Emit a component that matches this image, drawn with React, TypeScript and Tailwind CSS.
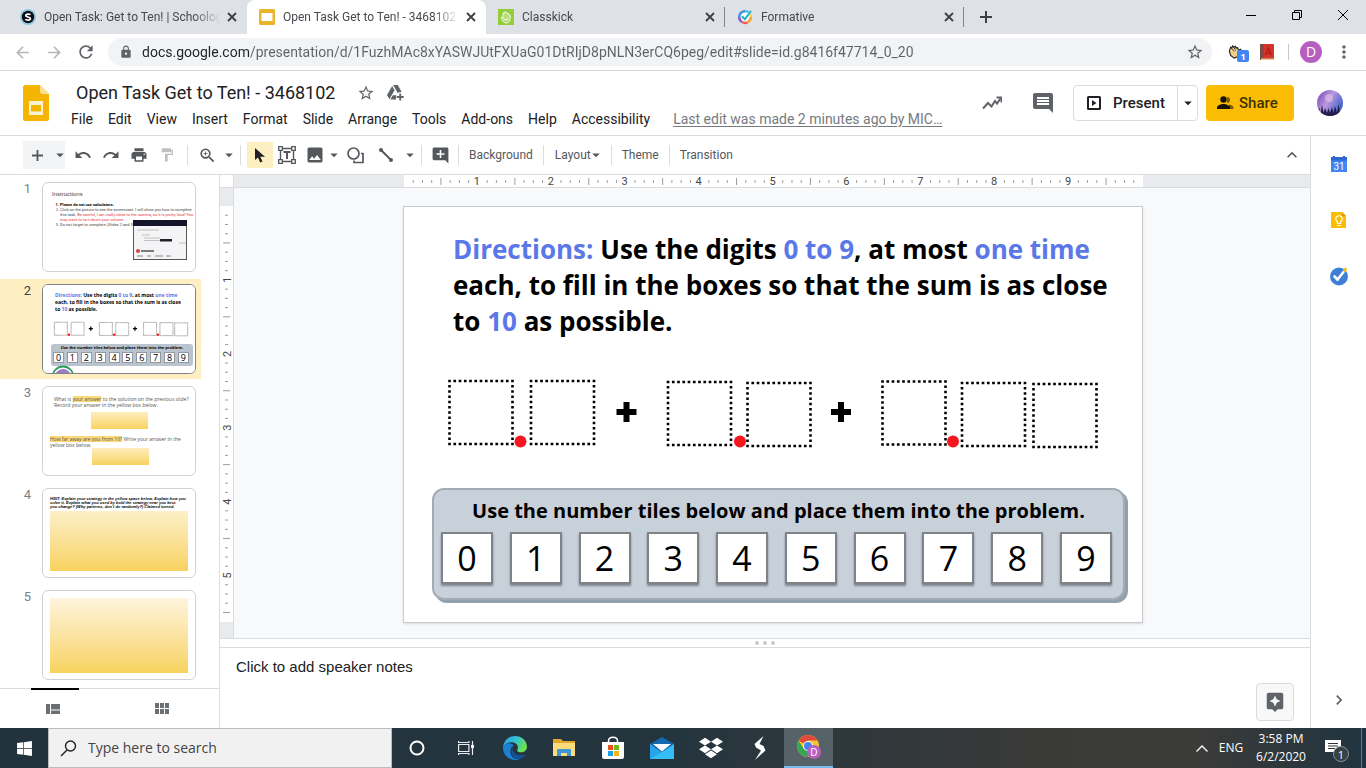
import type { ReactNode } from "react";
import {
  MdAddComment,
  MdArrowBack,
  MdArrowDropDown,
  MdArrowForward,
  MdAssistant,
  MdFormatPaint,
  MdImage,
  MdInsertComment,
  MdKeyboardArrowRight,
  MdKeyboardArrowUp,
  MdLock,
  MdMoreVert,
  MdPrint,
  MdRedo,
  MdRefresh,
  MdStarBorder,
  MdUndo,
  MdZoomIn,
} from "react-icons/md";
import { FaDropbox, FaWindows } from "react-icons/fa";

/* ---------- Browser chrome ---------- */

function SchoologyIcon() {
  return (
    <svg viewBox="0 0 16 16" className="size-4 shrink-0">
      <circle cx="8" cy="8" r="8" fill="#8fc8e2" />
      <circle cx="8" cy="8" r="6.2" fill="#0b0f12" />
      <path d="M10.4 5.900C9.800 4.800 5.800 4.500 5.800 6.500s4.600 1 4.600 3.100S6 11.500 5.500 10" fill="none" stroke="#fff" strokeWidth="1.7" />
    </svg>
  );
}

function SlidesTabIcon() {
  return (
    <svg viewBox="0 0 16 16" className="size-4 shrink-0">
      <rect width="16" height="16" rx="1.5" fill="#e9b52c" />
      <rect x="2.5" y="4" width="11" height="8" fill="#fff" />
    </svg>
  );
}

function ClasskickIcon() {
  return (
    <svg viewBox="0 0 16 16" className="size-4 shrink-0">
      <rect width="16" height="16" fill="#93ce3a" />
      <path
        d="M3 8.500c.5-.8 1.600-.4 2 .4V4.500c0-.9 1.200-.9 1.300 0V3.400c.1-.9 1.400-.9 1.500 0v.4c.2-.8 1.400-.7 1.500.2v.8c.3-.7 1.500-.5 1.500.4V6c.4-.6 1.500-.4 1.500.5C12.500 11 11.500 14 8.300 14 5.500 14 4.500 12 3 8.500Z"
        fill="#b5de78"
        stroke="#fff"
        strokeWidth=".8"
      />
      <path d="M5.500 9.500c1.500 1.800 3.500 1.800 5 -.3" fill="none" stroke="#fff" />
    </svg>
  );
}

function FormativeIcon() {
  return (
    <svg viewBox="0 0 16 16" className="size-4 shrink-0" fill="none" strokeWidth="2.5">
      <circle cx="8" cy="8" r="6" fill="#fff" />
      <path d="M8 2.200A5.800 5.800 0 0 0 2.200 8" stroke="#3f8fe0" />
      <path d="M2.200 8A5.800 5.800 0 0 0 5 13" stroke="#8a5fc4" />
      <path d="M5 13a5.800 5.800 0 0 0 5.500.3" stroke="#ee5f5b" />
      <path d="M10.500 13.300A5.800 5.800 0 0 0 13.800 8" stroke="#f6a63a" />
      <path d="M13.800 8a5.800 5.800 0 0 0-.6-2.600" stroke="#f7d23e" />
      <path d="M8 2.200c1.500 0 2.600.4 3.500 1.100" stroke="#52c4e8" />
      <path d="m4.800 7.300 3 3L14 2" stroke="#18b3c7" strokeWidth="2" />
    </svg>
  );
}

const tabs: { title: string; icon: ReactNode; active?: boolean; line?: boolean }[] = [
  { title: "Open Task: Get to Ten! | Schoology", icon: <SchoologyIcon /> },
  { title: "Open Task Get to Ten! - 3468102", icon: <SlidesTabIcon />, active: true },
  { title: "Classkick", icon: <ClasskickIcon />, line: true },
  { title: "Formative", icon: <FormativeIcon />, line: true },
];

function TabStrip() {
  return (
    <div className="flex h-[34px] items-stretch bg-[#dee1e6] pl-2">
      {tabs.map((tab) => (
        <div
          key={tab.title}
          className={
            tab.active
              ? "flex w-[239px] items-center rounded-t-lg bg-white pl-3"
              : "flex w-[239px] items-center pl-3"
          }
        >
          {tab.icon}
          <a
            href="#tab"
            className="ml-2 w-[176px] overflow-hidden mask-[linear-gradient(90deg,#000_150px,transparent_176px)] font-[Roboto,sans-serif] text-xs whitespace-nowrap text-[#45494d]"
          >
            {tab.title}
          </a>
          <button aria-label="Close tab" className="ml-1 grid size-4 shrink-0 place-items-center text-[#3c4043]">
            <svg viewBox="0 0 10 10" className="size-[10px]" stroke="currentColor" strokeWidth="1.8"><path d="m1 1 8 8M9 1 1 9" /></svg>
          </button>
          {tab.line && <span className="ml-[6px] h-5 w-px shrink-0 bg-[#80868b]" />}
        </div>
      ))}
      <button aria-label="New tab" className="grid w-11 place-items-center text-[#3c4043]">
        <svg viewBox="0 0 12 12" className="size-3" stroke="currentColor" strokeWidth="2"><path d="M6 0v12M0 6h12" /></svg>
      </button>
      <div className="ml-auto flex h-[29px] text-black">
        <button aria-label="Minimize" className="grid w-[46px] place-items-center">
          <svg viewBox="0 0 10 10" className="size-[10px]"><path d="M0 5.500h10" stroke="currentColor" /></svg>
        </button>
        <button aria-label="Restore" className="grid w-[46px] place-items-center">
          <svg viewBox="0 0 10 10" className="size-[10px]" fill="none" stroke="currentColor">
            <path d="M.5 2.500h7v7h-7zM2.500 2.500v-2h7v7h-2" />
          </svg>
        </button>
        <button aria-label="Close window" className="grid w-[46px] place-items-center">
          <svg viewBox="0 0 10 10" className="size-[10px]" stroke="currentColor"><path d="m0 0 10 10M10 0 0 10" /></svg>
        </button>
      </div>
    </div>
  );
}

function AddressBar() {
  return (
    <div className="flex h-[37px] items-center border-b border-[#d5d7da] pr-3 pl-[6px] text-[#5f6368]">
      <button aria-label="Back" className="grid w-8 place-items-center text-[#b4b6b9]"><MdArrowBack className="size-[19px]" /></button>
      <button aria-label="Forward" className="grid w-8 place-items-center text-[#b4b6b9]"><MdArrowForward className="size-[19px]" /></button>
      <button aria-label="Reload" className="grid w-8 place-items-center"><MdRefresh className="size-5" /></button>
      <div className="ml-[6px] flex h-7 flex-1 items-center rounded-full bg-[#f1f3f4] pr-2 pl-[11px]">
        <MdLock className="size-[14px]" />
        <input
          aria-label="Address"
          defaultValue="docs.google.com/presentation/d/1FuzhMAc8xYASWJUtFXUaG01DtRIjD8pNLN3erCQ6peg/edit#slide=id.g8416f47714_0_20"
          className="ml-[9px] min-w-0 flex-1 bg-[linear-gradient(90deg,#202124_107px,#5f6368_107px)] bg-clip-text font-[Roboto,sans-serif] text-sm text-transparent outline-none"
        />
        <button aria-label="Bookmark this page"><MdStarBorder className="size-[18px]" /></button>
      </div>
      <button aria-label="Hand raise extension" className="relative ml-4 size-5">
        <svg viewBox="0 0 16 16" className="size-[14px]">
          <path d="M1.500 7 3 2.500l1 1L5.500 1l1.200 1.500L8.500 1.500l.8 2L11 3l1 3 2.500-1 .5 2-3 6-5 2-4-3Z" fill="#efcf8d" stroke="#222" strokeWidth="1.3" />
          <path d="m4 3.500 3 4M6.700 2.500l2 4" stroke="#222" strokeWidth=".8" />
        </svg>
        <span className="absolute top-2 left-[9px] grid h-3 w-3 place-items-center rounded-xs bg-[#4285f4] font-['Open_Sans',sans-serif] text-[9px] font-bold text-white">1</span>
      </button>
      <button aria-label="Dictionary extension" className="ml-3 grid place-items-center">
        <svg viewBox="0 0 14 16" className="h-4 w-[14px]">
          <rect width="14" height="16" rx="1" fill="#d5342b" />
          <rect width="3.5" height="16" fill="#7d4a45" />
          <path d="M1 14.500h13V16H1z" fill="#e7c9a4" />
          <path d="m5.500 11 3-7 3 7M6.500 9h4" stroke="#b01f1b" fill="none" strokeWidth="1.3" />
        </svg>
      </button>
      <span className="mr-[11px] ml-[14px] h-4 w-px bg-[#c6c8ca]" />
      <button aria-label="Profile" className="grid size-[22px] place-items-center rounded-full bg-[#b75fc0] font-['Open_Sans',sans-serif] text-sm text-white">D</button>
      <button aria-label="Browser menu" className="ml-3 grid place-items-center"><MdMoreVert className="size-5" /></button>
    </div>
  );
}

/* ---------- Slides header ---------- */

const menus = ["File", "Edit", "View", "Insert", "Format", "Slide", "Arrange", "Tools", "Add-ons", "Help", "Accessibility"];

function Avatar() {
  return (
    <svg viewBox="0 0 26 26" className="size-[26px]">
      <defs>
        <linearGradient id="sky" x1="0" y1="0" x2="1" y2=".6">
          <stop offset="0" stopColor="#7440b0" />
          <stop offset=".5" stopColor="#bb98e0" />
          <stop offset="1" stopColor="#3a62c9" />
        </linearGradient>
        <clipPath id="round"><circle cx="13" cy="13" r="13" /></clipPath>
      </defs>
      <g clipPath="url(#round)">
        <rect width="26" height="26" fill="url(#sky)" />
        <circle cx="12" cy="8" r="4" fill="#f0cbe6" opacity=".5" />
        <path d="M0 24 2 17l1.500 6L5 15l1.500 8L8 18l2 5 1.500-5 1.500 5 2-6 1.500 6L18 16l2 7 1.500-9 1.500 9 3-5v10H0Z" fill="#221c4a" />
      </g>
    </svg>
  );
}

function DriveIcon() {
  return (
    <svg viewBox="0 0 17 16" className="h-4 w-[17px]" fill="currentColor">
      <path d="M5.200 1 0 10l2.400 4.200L7.600 5.200Z" />
      <path d="M6.200 0h4.600l4 7.200a5 5 0 0 0-4 1Z" />
      <path d="M3.400 14.500 5.800 10.300H9.400a5 5 0 0 0-.2 4.200Z" />
      <path d="M12.300 8.500h1.800v2.600h2.600v1.800h-2.600v2.600h-1.800v-2.600H9.700v-1.800h2.600Z" />
    </svg>
  );
}

function DocHeader() {
  return (
    <header className="flex h-[65px] items-center border-b border-[#dadce0] pr-[23px] pl-[23px]">
      <svg viewBox="0 0 26 36" className="h-9 w-[26px] shrink-0">
        <path d="M2.500 0H17l9 9v24.500a2.500 2.500 0 0 1-2.500 2.500h-21A2.500 2.500 0 0 1 0 33.500v-31A2.500 2.500 0 0 1 2.500 0Z" fill="#f4b400" />
        <path d="M17 0v6.500A2.500 2.500 0 0 0 19.500 9H26Z" fill="#fbdf93" />
        <path fillRule="evenodd" d="M6 16h14v14H6Zm2 4v6.500h10V20Z" fill="#fdf3d3" />
      </svg>
      <div className="ml-[22px] flex min-w-0 flex-1 flex-col pt-[3px]">
        <div className="flex h-7 items-center pl-[5px] text-[#5f6368]">
          <input
            aria-label="Document title"
            defaultValue="Open Task Get to Ten! - 3468102"
            className="field-sizing-content font-[Roboto,sans-serif] text-lg text-[#202124] outline-none"
          />
          <button aria-label="Star" className="ml-[22px]"><MdStarBorder className="size-[18px]" /></button>
          <button aria-label="Move to Drive" className="ml-3"><DriveIcon /></button>
        </div>
        <nav className="flex h-6 items-center gap-[15px] font-[Roboto,sans-serif] text-sm whitespace-nowrap text-[#202124]">
          {menus.map((m) => <button key={m}>{m}</button>)}
          <a href="#history" className="ml-2 text-[#777b80] underline underline-offset-2">
            Last edit was made 2 minutes ago by MIC…
          </a>
        </nav>
      </div>
      <button aria-label="Activity" className="grid size-6 place-items-center text-[#5f6368]">
        <svg viewBox="0 0 20 14" className="h-[14px] w-5" fill="none" stroke="currentColor" strokeWidth="2">
          <path d="m1 12.500 5-5.500 3.500 3.500L13 5l2 2.500L18.500 2.500" />
          <path d="M14.500 1.500h5v5" />
        </svg>
      </button>
      <button aria-label="Comments" className="ml-[27px] text-[#5f6368]"><MdInsertComment className="size-6" /></button>
      <div className="ml-[18px] flex h-9 rounded border border-[#dadce0] text-[#202124]">
        <button className="flex w-[103px] items-center gap-3 pl-[13px] font-[Roboto,sans-serif] text-[15px] font-medium">
          <svg viewBox="0 0 14 14" className="size-[14px] shrink-0">
            <rect x="1" y="1" width="12" height="12" rx=".5" fill="none" stroke="currentColor" strokeWidth="2" />
            <path d="M5 4v6l4.500-3Z" fill="currentColor" />
          </svg>
          Present
        </button>
        <button aria-label="Present options" className="grid w-5 place-items-center border-l border-[#dadce0]">
          <MdArrowDropDown className="size-[18px]" />
        </button>
      </div>
      <button className="ml-2 flex h-9 w-[88px] items-center gap-[5px] rounded bg-[#fbbc04] pl-[11px] font-[Roboto,sans-serif] text-[15px] font-medium text-[#3f3206]">
        <svg viewBox="0 0 17 14" className="h-[14px] w-[17px]">
          <path d="M10 1a3 3 0 1 1 0 6V1Zm2 7.500c2.500.4 4.500 1.500 4.500 3V13H12Z" fill="#7a5c0c" />
          <circle cx="6.5" cy="3.5" r="3.2" fill="#151208" />
          <path d="M0 13v-1.500c0-2.200 4-3.500 6.500-3.500s6.500 1.300 6.500 3.500V13Z" fill="#151208" />
        </svg>
        Share
      </button>
      <button aria-label="Google account" className="ml-[23px]"><Avatar /></button>
    </header>
  );
}

/* ---------- Slides toolbar ---------- */

function Tool({ label, children }: { label: string; children: ReactNode }) {
  return <button aria-label={label} className="grid h-7 w-7 place-items-center">{children}</button>;
}

function Drop({ label }: { label: string }) {
  return (
    <button aria-label={label} className="grid h-7 w-[14px] place-items-center">
      <MdArrowDropDown className="size-[18px]" />
    </button>
  );
}

function Divider() {
  return <span className="mx-[6px] h-5 w-px bg-[#dadce0]" />;
}

function Toolbar() {
  return (
    <div className="flex h-[39px] items-center border-b border-[#dadce0] pr-1 pl-[23px] font-[Roboto,sans-serif] text-xs text-[#54585d]">
      <div className="mr-1 flex bg-[#f1f3f4]">
        <Tool label="New slide">
          <svg viewBox="0 0 12 12" className="size-[11px]" stroke="currentColor" strokeWidth="2"><path d="M6 0v12M0 6h12" /></svg>
        </Tool>
        <Drop label="New slide layouts" />
      </div>
      <Tool label="Undo"><MdUndo className="size-[18px]" /></Tool>
      <Tool label="Redo"><MdRedo className="size-[18px]" /></Tool>
      <Tool label="Print"><MdPrint className="size-[18px]" /></Tool>
      <button aria-label="Paint format" className="grid h-7 w-7 place-items-center"><MdFormatPaint className="size-4 text-[#bdbfc2]" /></button>
      <Divider />
      <button aria-label="Zoom" className="grid h-7 w-[26px] place-items-center"><MdZoomIn className="size-[19px]" /></button>
      <Drop label="Zoom options" />
      <Divider />
      <button aria-label="Select" className="grid h-[26px] w-[26px] place-items-center bg-[#feefc3] text-[#202124]">
        <svg viewBox="0 0 10 15" className="h-[15px] w-[10px]">
          <path d="M0 0v12l3-2.500 2.200 5 2.300-1-2.200-4.700H10Z" fill="currentColor" />
        </svg>
      </button>
      <Tool label="Text box">
        <svg viewBox="0 0 18 18" className="size-[18px]" fill="none" stroke="currentColor">
          <path d="M2.500 2.500h13v13h-13z" strokeWidth="1.4" />
          <path d="M.7.7h3.600v3.600H.7zM13.700.7h3.600v3.600h-3.600zM.7 13.700h3.600v3.600H.7zM13.700 13.700h3.600v3.600h-3.600z" fill="#fff" strokeWidth="1.3" />
          <path d="M5.500 6h7M9 6v7" strokeWidth="2" />
        </svg>
      </Tool>
      <Tool label="Image"><MdImage className="size-5" /></Tool>
      <div className="-ml-1 flex"><Drop label="Image options" /></div>
      <button aria-label="Shape" className="grid w-8 place-items-center">
        <svg viewBox="0 0 17 17" className="size-[17px]" fill="none" stroke="currentColor" strokeWidth="1.7">
          <circle cx="6.5" cy="6.5" r="5.5" />
          <path d="M14 6.500h2v9H7v-2" />
        </svg>
      </button>
      <button aria-label="Line" className="grid w-[30px] place-items-center">
        <svg viewBox="0 0 14 14" className="size-[14px]">
          <path d="m2 2 10 10" stroke="currentColor" strokeWidth="2" />
          <circle cx="2" cy="2" r="2" fill="currentColor" />
          <circle cx="12" cy="12" r="2" fill="currentColor" />
        </svg>
      </button>
      <Drop label="Line options" />
      <Divider />
      <button aria-label="Add comment" className="grid w-6 place-items-center"><MdAddComment className="size-[19px]" /></button>
      <Divider />
      <button className="px-1">Background</button>
      <Divider />
      <button className="flex items-center pl-[5px]">Layout<MdArrowDropDown className="-ml-1 size-[18px]" /></button>
      <Divider />
      <button className="px-1">Theme</button>
      <Divider />
      <button className="px-1">Transition</button>
      <button aria-label="Hide the menus" className="ml-auto grid w-7 place-items-center"><MdKeyboardArrowUp className="size-5" /></button>
    </div>
  );
}

/* ---------- Slide contents ---------- */

const digits = [0, 1, 2, 3, 4, 5, 6, 7, 8, 9];
const boxes = [[6.5, 6], [88, 6], [225, 7], [304.5, 8], [439.5, 6.5], [519, 8], [590.5, 9]];

function Equation() {
  return (
    <svg viewBox="0 0 660 80" className="block w-full" role="img" aria-label="Boxes for the sum">
      {boxes.map(([x, y]) => (
        <rect key={x} x={x} y={y} width="63" height="63" fill="none" stroke="#000" strokeWidth="2.6" strokeDasharray="2.700 2.550" strokeDashoffset="1.350" />
      ))}
      <path d="M173.500 37h20M183.500 27v20M388 37h20M398 27v20" stroke="#000" strokeWidth="6" />
      {[77.5, 297, 510].map((x) => <circle key={x} cx={x} cy="66.5" r="6" fill="#f5171f" />)}
    </svg>
  );
}

function Blue({ children }: { children: ReactNode }) {
  return <span className="text-[#5a78e8]">{children}</span>;
}

function DirectionsText() {
  return (
    <>
      <Blue>Directions:</Blue> Use the digits <Blue>0 to 9</Blue>, at most <Blue>one time</Blue>
      <br />
      each, to fill in the boxes so that the sum is as close
      <br />
      to <Blue>10</Blue> as possible.
    </>
  );
}

function MainSlide() {
  return (
    <article className="h-[417px] w-[740px] shrink-0 border border-[#c9cbce] bg-white font-['Open_Sans',sans-serif] shadow-sm">
      <p className="mt-6 ml-[49px] text-[26px] leading-9 font-bold whitespace-nowrap text-black">
        <DirectionsText />
      </p>
      <div className="mt-9 ml-[39px] w-[660px]"><Equation /></div>
      <div className="mt-[33px] ml-7 w-[693px] rounded-xl border-2 border-[#a3abb3] bg-[#c8d0da] px-[7px] pt-[7px] pb-[14px] shadow-[3px_3px_0_#93a0a9]">
        <p className="text-center text-xl leading-7 font-bold whitespace-nowrap text-black">
          Use the number tiles below and place them into the problem.
        </p>
        <ul className="mt-[7px] flex justify-between pr-1">
          {digits.map((d) => (
            <li key={d} className="grid size-[52px] place-items-center border-2 border-[#7f8388] bg-white text-[34px] leading-none text-black shadow-[0_2px_2px_#7d868f]">
              {d}
            </li>
          ))}
        </ul>
      </div>
    </article>
  );
}

/* ---------- Filmstrip ---------- */

function ThumbOne() {
  return (
    <div className="relative pt-2 pl-[9px] font-[Roboto,sans-serif] text-[4px] leading-[5px] whitespace-nowrap text-[#444]">
      <p className="font-['Liberation_Sans',sans-serif] text-[6px] leading-[7px]">Instructions</p>
      <ol className="mt-1 ml-2 list-outside list-decimal">
        <li className="font-bold text-black">Please do not use calculators.</li>
        <li>
          Click on the picture to see the screencast. I will show you how to complete
          <br />
          this task. <span className="text-[#e5383b]">Be careful, I am really close to the camera, so it is pretty loud! You
          <br />
          may want to turn down your volume.</span>
        </li>
        <li>Do not forget to complete (Slides 2 and 3).</li>
      </ol>
      <svg viewBox="0 0 54 40" className="absolute top-[37px] left-[90px] h-10 w-[54px]">
        <rect x=".5" y=".5" width="53" height="39" fill="#f4f4f6" stroke="#555" />
        <path d="M0 0h54v6H0z" fill="#15152a" />
        <path d="M4 10h22M9 15h8M11 18h16M11 20.500h16M46 23h7" stroke="#aaa" strokeWidth=".7" />
        <path d="M27 19h12v2.500H27z" fill="#222" />
        <circle cx="5" cy="31" r="2" fill="#d8433b" />
        <path d="M8 31h13" stroke="#555" strokeWidth="1.5" />
        <path d="M4 36h6M14 36h4M22 36h8M33 36h5" stroke="#888" />
      </svg>
    </div>
  );
}

function ThumbTwo() {
  return (
    <div className="relative h-full bg-white pt-[7px] font-['Open_Sans',sans-serif]">
      <p className="ml-3 text-[5px] leading-[7px] font-bold whitespace-nowrap text-black"><DirectionsText /></p>
      <div className="mt-2 ml-[10px] w-[136px]"><Equation /></div>
      <div className="mt-[7px] ml-2 w-[142px] rounded-[3px] bg-[#b9c4ce] px-[2px] pb-[3px]">
        <p className="text-center text-[4px] leading-[8px] font-bold whitespace-nowrap text-black">
          Use the number tiles below and place them into the problem.
        </p>
        <ul className="flex justify-between pr-[2px]">
          {digits.map((d) => (
            <li key={d} className="grid size-[11px] place-items-center border border-[#9299a0] bg-white text-[9px] leading-none text-black">{d}</li>
          ))}
        </ul>
      </div>
      <svg viewBox="0 0 24 8" className="absolute bottom-0 left-[8px] h-2 w-6">
        <circle cx="12" cy="12" r="10.5" fill="#fff" stroke="#2f9e5b" strokeWidth="1.8" />
        <circle cx="12" cy="12" r="8" fill="#a07cc6" />
      </svg>
    </div>
  );
}

function Mark({ children }: { children: ReactNode }) {
  return <span className="bg-[#fbd878]">{children}</span>;
}

function ThumbThree() {
  return (
    <div className="pt-[9px] font-['Open_Sans',sans-serif] text-[5px] leading-[6px] whitespace-nowrap text-[#555]">
      <p className="ml-[11px]">
        What is <Mark>your answer</Mark> to the solution on the previous slide?
        <br />
        Record your answer in the yellow box below.
      </p>
      <div className="mt-1 ml-12 h-[17px] w-[57px] bg-linear-to-b from-[#fdeebd] to-[#f8d25c]" />
      <p className="mt-[7px] ml-[7px]">
        <Mark>How far away are you from 10?</Mark> Write your answer in the
        <br />
        yellow box below.
      </p>
      <div className="ml-[49px] h-[17px] w-[57px] bg-linear-to-b from-[#fdeebd] to-[#f8d25c]" />
    </div>
  );
}

function ThumbFour() {
  return (
    <div className="px-[7px] pt-2 font-['Liberation_Sans',sans-serif] text-[4px] leading-[4px] font-bold whitespace-nowrap text-black italic">
      <p>
        HINT: Explain your strategy in the yellow space below. Explain how you
        <br />
        solve it. Explain what you used by bold the strategy near you best.
        <br />
        you change? (Why patterns, don&apos;t do randomly?) Claimed turned.
      </p>
      <div className="mt-[2px] h-[60px] bg-linear-to-b from-[#fdf0c8] to-[#f8d25c]" />
    </div>
  );
}

function ThumbFive() {
  return <div className="mx-[7px] mt-[7px] h-[75px] bg-linear-to-b from-[#fef4dc] to-[#f8d25c]" />;
}

const thumbs = [<ThumbOne key="1" />, <ThumbTwo key="2" />, <ThumbThree key="3" />, <ThumbFour key="4" />, <ThumbFive key="5" />];

function Filmstrip() {
  return (
    <aside className="flex w-[220px] shrink-0 flex-col border-r border-[#dadce0]">
      <ol className="flex flex-1 flex-col gap-[2px] overflow-hidden pt-[2px]">
        {thumbs.map((thumb, i) => (
          <li
            key={i}
            className={
              i === 1
                ? "flex h-[100px] w-[201px] shrink-0 items-center bg-[#feefc3] text-[#3c4043]"
                : "flex h-[100px] w-[201px] shrink-0 items-center text-[#7b7f84]"
            }
          >
            <span className="w-[42px] self-start pt-[2px] pr-[11px] text-right font-[Roboto,sans-serif] text-[13px]">{i + 1}</span>
            <div
              className={
                i === 1
                  ? "h-[90px] w-[154px] overflow-hidden rounded-md border border-[#7f8286] bg-white"
                  : "h-[90px] w-[154px] overflow-hidden rounded-md border border-[#cfd1d4] bg-white"
              }
            >
              {thumb}
            </div>
          </li>
        ))}
      </ol>
      <div className="flex h-10 justify-between border-t border-[#dadce0] pr-[33px] pl-[31px] text-[#6b6e72]">
        <button aria-label="Filmstrip view" className="-mt-px grid w-12 place-items-center border-t-2 border-black">
          <svg viewBox="0 0 14 10" className="-ml-1 h-[10px] w-[14px]" fill="currentColor"><path d="M0 0h4v10H0zM5 0h9v5.500H5zM5 6.500h9V10H5z" /></svg>
        </button>
        <button aria-label="Grid view" className="grid w-12 place-items-center">
          <svg viewBox="0 0 14 11" className="h-[11px] w-[14px]" fill="currentColor">
            <path d="M0 0h4v5H0zM5 0h4v5H5zM10 0h4v5h-4zM0 6h4v5H0zM5 6h4v5H5zM10 6h4v5h-4z" />
          </svg>
        </button>
      </div>
    </aside>
  );
}

/* ---------- Workspace ---------- */

function ticks(length: number) {
  const out: { at: number; kind: "number" | "half" | "eighth" }[] = [];
  for (let i = 1; (i * 73.9) / 8 < length; i++) {
    out.push({ at: (i * 73.9) / 8, kind: i % 8 === 0 ? "number" : i % 4 === 0 ? "half" : "eighth" });
  }
  return out;
}

function HorizontalRuler() {
  return (
    <div className="flex justify-center border-b border-[#dadce0] bg-[#e8eaed] pl-[2px]">
      <svg viewBox="0 0 739 12" className="block h-3 w-[739px] shrink-0 bg-white">
        {ticks(738).map((t, i) =>
          t.kind === "number" ? (
            <text key={i} x={t.at - 1} y="10" textAnchor="middle" fontSize="11" fill="#444" fontFamily="Roboto, sans-serif">{(i + 1) / 8}</text>
          ) : (
            <path key={i} d={t.kind === "half" ? `M${t.at} 3v7` : `M${t.at} 5v3`} stroke="#9a9da1" />
          ),
        )}
      </svg>
    </div>
  );
}

function VerticalRuler() {
  return (
    <div className="flex flex-col justify-center border-r border-[#dadce0] bg-[#e8eaed] pt-[2px]">
      <svg viewBox="0 0 13 416" className="block h-[416px] w-[13px] shrink-0 bg-white">
        {ticks(415).map((t, i) =>
          t.kind === "number" ? (
            <text key={i} transform={`translate(11 ${t.at}) rotate(-90)`} textAnchor="middle" fontSize="11" fill="#444" fontFamily="Roboto, sans-serif">{(i + 1) / 8}</text>
          ) : (
            <path key={i} d={t.kind === "half" ? `M3 ${t.at}h7` : `M5 ${t.at}h3`} stroke="#9a9da1" />
          ),
        )}
      </svg>
    </div>
  );
}

function Workspace() {
  return (
    <section className="flex min-w-0 flex-1 flex-col">
      <div className="grid min-h-0 flex-1 grid-cols-[14px_minmax(0,1fr)] grid-rows-[13px_minmax(0,1fr)]">
        <div className="border-r border-b border-[#dadce0]" />
        <HorizontalRuler />
        <VerticalRuler />
        <div className="flex items-center justify-center bg-[#f8f9fa] pt-[2px] pl-[2px]"><MainSlide /></div>
      </div>
      <div className="flex h-[10px] items-center justify-center gap-1 border-y border-[#dadce0]">
        <span className="size-1 rounded-full bg-[#c6c8ca]" />
        <span className="size-1 rounded-full bg-[#c6c8ca]" />
        <span className="size-1 rounded-full bg-[#c6c8ca]" />
      </div>
      <div className="flex h-20 items-end pr-4 pl-4">
        <textarea
          aria-label="Speaker notes"
          defaultValue="Click to add speaker notes"
          className="h-full flex-1 resize-none pt-2 font-['Liberation_Sans',sans-serif] text-[15px] leading-[22px] text-[#202124] outline-none"
        />
        <button aria-label="Explore" className="mb-[7px] grid size-[38px] place-items-center rounded border border-[#dadce0] bg-[#f8f8f8] text-[#5f6368]">
          <MdAssistant className="size-[22px]" />
        </button>
      </div>
    </section>
  );
}

function SidePanel() {
  return (
    <aside className="flex w-14 shrink-0 flex-col items-center border-l border-[#dadce0] pt-5">
      <button aria-label="Calendar">
        <svg viewBox="0 0 16 16" className="size-4">
          <path d="M0 1h16v15H0z" fill="#4285f4" />
          <path d="M0 1h16v3.500H0z" fill="#2f66d0" />
          <path d="M2 0h2v2H2zM12 0h2v2h-2z" fill="#2f66d0" />
          <text x="8" y="13.5" textAnchor="middle" fontSize="10" fill="#fff" fontFamily="Roboto, sans-serif">31</text>
        </svg>
      </button>
      <button aria-label="Keep" className="mt-10">
        <svg viewBox="0 0 16 16" className="size-4">
          <path d="M1 0h10l4 4v11a1 1 0 0 1-1 1H1a1 1 0 0 1-1-1V1a1 1 0 0 1 1-1Z" fill="#fbbc04" />
          <path d="M11 0v4h4Z" fill="#e09a00" />
          <path d="M6.500 11.500v-1.700a3.200 3.200 0 1 1 3 0v1.700Z" fill="none" stroke="#fff" strokeWidth="1.2" />
          <path d="M6.300 13.500h3.400" stroke="#fff" />
        </svg>
      </button>
      <button aria-label="Tasks" className="mt-[38px]">
        <svg viewBox="0 0 20 20" className="size-5">
          <circle cx="10" cy="10.5" r="9" fill="#3f7fd8" />
          <path d="m8.500 13.500 6-7.500" stroke="#fff" strokeWidth="2.6" strokeLinecap="round" />
          <path d="m5.500 10.500 3 3" stroke="#fff" strokeWidth="2.6" strokeLinecap="round" />
          <path d="m15.500 4.500 1-1.300" stroke="#f8bb16" strokeWidth="3" strokeLinecap="round" />
        </svg>
      </button>
      <button aria-label="Hide side panel" className="mt-auto mb-[18px] text-[#5f6368]"><MdKeyboardArrowRight className="size-5" /></button>
    </aside>
  );
}

/* ---------- Windows taskbar ---------- */

const pinned: { label: string; icon: ReactNode; open?: boolean }[] = [
  { label: "Cortana", icon: <svg viewBox="0 0 16 16" className="size-4"><circle cx="8" cy="8" r="6.5" fill="none" stroke="#fff" strokeWidth="2" /></svg> },
  {
    label: "Task View",
    icon: (
      <svg viewBox="0 0 16 16" className="size-4" fill="none" stroke="#e8eaec" strokeWidth="1.2">
        <path d="M.6 4.500h10.300v7H.6zM.6 1v1.500h10.300V1M.6 15v-1.500h10.300V15M14.500 1v14" />
        <path d="M13 5h3v3h-3z" fill="#fff" stroke="none" />
      </svg>
    ),
  },
  {
    label: "Edge",
    icon: (
      <svg viewBox="0 0 24 24" className="size-6">
        <defs>
          <linearGradient id="edgeTop" x1="0" y1="0" x2="1" y2=".4"><stop offset="0" stopColor="#2b9be0" /><stop offset=".55" stopColor="#32c3d2" /><stop offset="1" stopColor="#6be054" /></linearGradient>
        </defs>
        <path d="M12 0C5.500 0 .7 4.800 0 11.500 2.500 6.500 7 5.500 10.500 6.500c4 1 5.500 4.500 3.700 7.500-.5 1.300 1.300 2.300 3.800 2.300 3.500 0 6-2.300 6-5.300C24 4.500 18.500 0 12 0Z" fill="url(#edgeTop)" />
        <path d="M0 11.500C0 18.500 5 24 12 24c1.800 0 3-.2 4-.6-6-.2-9.500-5-8.500-9.500.4-2 1.500-3.300 3.500-4.500C6.500 5.500 1 7.500 0 11.500Z" fill="#1b7fd4" />
        <path d="M9.300 11C6.500 16 10 23.500 16 23.400c2.800-1 5.200-2.900 6.300-5.100-4.800 2.200-12.800 1.200-13-7.300Z" fill="#12549c" />
      </svg>
    ),
  },
  {
    label: "File Explorer",
    icon: (
      <svg viewBox="0 0 22 20" className="h-5 w-[22px]">
        <path d="M0 1h8l2 2h12v15H0Z" fill="#e2a92d" />
        <path d="M0 5h22v13H0Z" fill="#fbdc7c" />
        <path d="M4 18v-6q0-1 1-1h12q1 0 1 1v6h-4v-3H8v3Z" fill="#3f97d8" />
      </svg>
    ),
  },
  {
    label: "Microsoft Store",
    icon: (
      <svg viewBox="0 0 24 24" className="size-6">
        <path d="M7.500 7V5c0-5 9-5 9 0v2" fill="none" stroke="#fff" strokeWidth="1.5" />
        <path d="M1 6h22v15q0 2-2 2H3q-2 0-2-2Z" fill="#fff" />
        <path d="M7 9h5v5H7z" fill="#e8501f" /><path d="M13 9h5v5h-5z" fill="#7cb518" />
        <path d="M7 15h5v5H7z" fill="#1ba1e2" /><path d="M13 15h5v5h-5z" fill="#f9b61a" />
      </svg>
    ),
  },
  {
    label: "Mail",
    icon: (
      <svg viewBox="0 0 24 22" className="h-[22px] w-6">
        <path d="M0 7 12 0l12 7v15H0Z" fill="#1269b0" />
        <path d="m0 7 12 8.500L24 7v15H0Z" fill="#27a3e6" />
        <path d="m0 22 14-8L24 7v15Z" fill="#35bdf5" />
        <path d="M3 7h18l-9 7.500Z" fill="#f5fbff" />
      </svg>
    ),
  },
  { label: "Dropbox", icon: <FaDropbox className="size-6 text-white" /> },
  {
    label: "Lightning app",
    icon: (
      <svg viewBox="0 0 14 24" className="h-6 w-[14px]">
        <path d="M10.500 0 1.500 8 3 11.500l5 3L2 24l10.500-9.500L10.500 10l-4-2Z" fill="#fff" />
      </svg>
    ),
  },
  {
    label: "Chrome",
    open: true,
    icon: (
      <svg viewBox="0 0 24 24" className="size-6">
        <circle cx="11" cy="11" r="11" fill="#f9c52c" />
        <path d="M11 11 1.500 5.500A11 11 0 0 1 20.500 5.500H11Z" fill="#df4a3c" />
        <path d="M1.500 5.500A11 11 0 0 0 11 22l4.500-8L11 11 6.500 13.500Z" fill="#35a556" />
        <circle cx="11" cy="11" r="5" fill="#fff" /><circle cx="11" cy="11" r="4" fill="#4384ee" />
        <circle cx="17" cy="17" r="7" fill="#b75fc0" />
        <text x="17" y="21" textAnchor="middle" fontSize="10" fill="#fff" fontFamily="Open Sans, sans-serif">D</text>
      </svg>
    ),
  },
];

function Taskbar() {
  return (
    <footer className="flex h-10 shrink-0 bg-[linear-gradient(90deg,#22333e_0%,#25353e_50%,#3a3a38_76%,#3b3b39_88%,#203440_100%)] font-['Open_Sans',sans-serif] text-white">
      <button aria-label="Start" className="grid w-12 place-items-center"><FaWindows className="size-[17px]" /></button>
      <label className="flex w-[344px] items-center border border-[#b9bbbd] bg-[#f1f1f1] pl-[11px]">
        <svg viewBox="0 0 17 17" className="size-[17px]" fill="none" stroke="#222" strokeWidth="1.4">
          <circle cx="10.5" cy="6" r="5" />
          <path d="M7 10 1 16" />
        </svg>
        <input aria-label="Search Windows" placeholder="Type here to search" className="ml-[11px] min-w-0 flex-1 text-sm outline-none placeholder:text-[#444]" />
      </label>
      {pinned.map((p) => (
        <button
          key={p.label}
          aria-label={p.label}
          className={
            p.open
              ? "grid w-[49px] place-items-center border-b-2 border-[#76b9ed] bg-[#566168]"
              : "grid w-[49px] place-items-center"
          }
        >
          {p.icon}
        </button>
      ))}
      <button aria-label="Show hidden icons" className="mr-1 ml-auto">
        <svg viewBox="0 0 12 7" className="h-[7px] w-3"><path d="m.5 6.500 5.500-5.500 5.500 5.500" fill="none" stroke="#fff" strokeWidth="1.3" /></svg>
      </button>
      <button className="w-[38px] text-xs">ENG</button>
      <button className="w-[62px] text-center text-xs leading-[18px] whitespace-nowrap">3:58 PM<br />6/2/2020</button>
      <button aria-label="Notifications" className="relative mr-[10px] ml-[13px] grid w-[26px] place-items-start pt-3">
        <svg viewBox="0 0 16 16" className="size-4"><path d="M0 0h16v12h-3v3.500L9.500 12H0Z" fill="#fff" /><path d="M3 3.500h10M3 6h10M3 8.500h7" stroke="#2c363c" /></svg>
        <span className="absolute top-[18px] left-2 grid size-4 place-items-center rounded-full border border-[#8b9094] bg-[#3a4145] text-[11px]">1</span>
      </button>
      <span className="w-px bg-[#6f7a80]" />
      <span className="w-1" />
    </footer>
  );
}

export default function App() {
  return (
    <div className="flex h-screen flex-col overflow-hidden bg-white">
      <TabStrip />
      <AddressBar />
      <DocHeader />
      <main className="flex min-h-0 flex-1">
        <div className="flex min-w-0 flex-1 flex-col">
          <Toolbar />
          <div className="flex min-h-0 flex-1">
            <Filmstrip />
            <Workspace />
          </div>
        </div>
        <SidePanel />
      </main>
      <Taskbar />
    </div>
  );
}
